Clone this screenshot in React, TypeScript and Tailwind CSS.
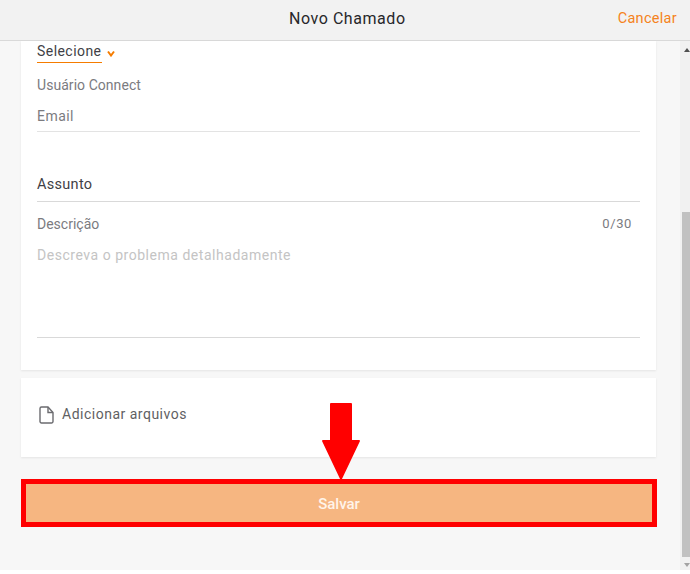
import React from "react";

function Field({ label, className }: { label: string; className: string }) {
  return <div className={className}>{label}</div>;
}

export default function App() {
  return (
    <div className="relative flex h-[574px] w-[690px] flex-col overflow-hidden bg-white font-['Roboto',sans-serif] tracking-[0.45px]">
      <header className="flex h-[41px] shrink-0 items-center justify-between border-b border-[#d9d9d9] bg-[#f2f2f2] pb-[2px] pl-[289px] pr-[13px]">
        <span className="text-[16px] tracking-[0.55px] text-[#27272a]">Novo Chamado</span>
        <span className="text-[14.5px] tracking-[0.3px] text-[#f58220]">Cancelar</span>
      </header>
      <div className="flex h-[529px] shrink-0">
        <main className="flex w-[680px] flex-col bg-[#f7f7f7] pl-[21px] pr-[24px]">
          <section className="h-[329px] shrink-0 bg-white px-[16px] shadow-[0_1px_2px_rgba(0,0,0,0.08)]">
            <div className="flex items-start">
              <div className="flex h-[22px] w-[65px] items-center whitespace-nowrap border-b border-[#f57c00] text-[14px] text-[#3f3f46]">Selecione</div>
              <svg className="ml-[5px] mt-[9px]" width="8" height="7" viewBox="0 0 8 7">
                <path d="M1 1.5 4 5.5 7 1.5" fill="none" stroke="#f57c00" strokeWidth="2" />
              </svg>
            </div>
            <Field label="Usuário Connect" className="mt-[12px] text-[14px] leading-[20px] tracking-[0.05px] text-[#7b7b7f]" />
            <Field label="Email" className="mt-[11px] h-[26px] border-b border-[#e3e3e3] text-[14px] leading-[20px] text-[#7b7b7f]" />
            <div className="mt-[40px] h-[30px] border-b border-[#d9d9d9] text-[14.5px] leading-[25px] tracking-[0.3px] text-[#3f3f46]">Assunto</div>
            <div className="mt-[12px] flex items-center justify-between pr-[8px] text-[14px] leading-[20px] text-[#7b7b7f]">
              <span className="tracking-[0px]">Descrição</span>
              <span className="text-[13px] tracking-[0.6px]">0/30</span>
            </div>
            <div className="mt-[11px] h-[93px] border-b border-[#d9d9d9] text-[14px] leading-[20px] tracking-[0.53px] text-[#c4c4c4]">Descreva o problema detalhadamente</div>
          </section>
          <section className="mt-[8px] flex h-[79px] shrink-0 items-center gap-[7px] bg-white pb-[6px] pl-[18px] text-[14px] tracking-[0.5px] text-[#5f5f63] shadow-[0_1px_2px_rgba(0,0,0,0.08)]">
            <svg width="16" height="18" viewBox="0 0 16 18" fill="none" stroke="#6b6b6f" strokeWidth="1.4">
              <path d="M2.5 1h6.5l5 5.5v9a1.5 1.5 0 0 1-1.5 1.5h-10A1.5 1.5 0 0 1 1 15.5v-13A1.5 1.5 0 0 1 2.5 1z" />
              <path d="M9 1v5.5h5" />
            </svg>
            <span>Adicionar arquivos</span>
          </section>
          <button className="mt-[22px] flex h-[48px] w-[636px] shrink-0 items-center justify-center border-[5px] border-[#ff0000] bg-[#f6b681] pt-[3px] text-[15px] font-medium tracking-[0px] text-[#fff4ea]">Salvar</button>
        </main>
        <aside className="flex w-[10px] flex-col items-center bg-[#f1f1f1]">
          <svg className="ml-[4px] mt-[7px] shrink-0" width="6" height="4" viewBox="0 0 6 4"><path d="M3 0 6 4H0z" fill="#505050" /></svg>
          <div className="ml-[2px] mt-[160px] h-[345px] w-[8px] shrink-0 bg-[#c1c1c1]" />
          <svg className="ml-[4px] mt-[6px] shrink-0" width="6" height="4" viewBox="0 0 6 4"><path d="M0 0H6L3 4z" fill="#a3a3a3" /></svg>
        </aside>
      </div>
      <svg className="absolute left-[322px] top-[403px]" width="38" height="78" viewBox="0 0 38 78">
        <path d="M8 1Q8 0 9 0H29Q30 0 30 1V37H37Q38 37 38 38L19 78 0 38Q0 37 1 37H8z" fill="#ff0000" />
      </svg>
    </div>
  );
}
